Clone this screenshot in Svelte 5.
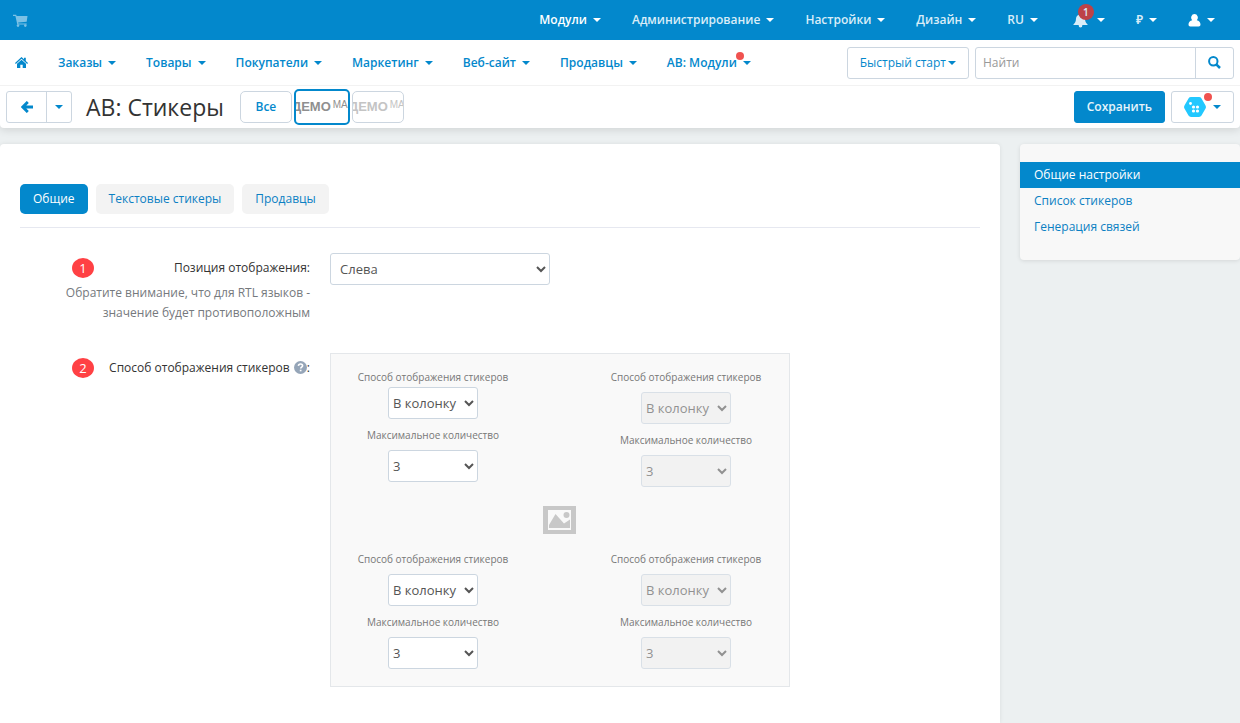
<script lang="ts">
  type Slot = { id: string; disabled: boolean; tight?: boolean };

  const topMenu = ['Модули', 'Администрирование', 'Настройки', 'Дизайн', 'RU'];
  const mainMenu = ['Заказы', 'Товары', 'Покупатели', 'Маркетинг', 'Веб-сайт', 'Продавцы', 'АВ: Модули'];
  const tabs = ['Общие', 'Текстовые стикеры', 'Продавцы'];
  const sections = ['Общие настройки', 'Список стикеров', 'Генерация связей'];

  const topSlots: Slot[] = [
    { id: 'top-left', disabled: false, tight: true },
    { id: 'top-right', disabled: true }
  ];
  const bottomSlots: Slot[] = [
    { id: 'bottom-left', disabled: false },
    { id: 'bottom-right', disabled: true }
  ];

  let activeTab = $state('Общие');
  let activeSection = $state('Общие настройки');
</script>

{#snippet slotFields(slot: Slot)}
  <div class="slot" class:tight={slot.tight}>
    <label for="{slot.id}-mode">Способ отображения стикеров</label>
    <select id="{slot.id}-mode" disabled={slot.disabled}>
      <option>В колонку</option>
      <option>В строку</option>
    </select>
    <label for="{slot.id}-max">Максимальное количество</label>
    <select id="{slot.id}-max" class="count" disabled={slot.disabled}>
      <option>3</option>
      <option>2</option>
      <option>1</option>
    </select>
  </div>
{/snippet}

<div class="page">
  <header>
    <div class="topbar">
      <a href="#store" class="cart" aria-label="Витрина">
        <svg width="15" height="13" viewBox="0 0 15 13" fill="currentColor">
          <path d="M0 .8h3.200l.4 1.200H14.500l-.8 5.700-8.500.8.2.9h8.300v1H4.300L2.400 1.900H0z" />
          <circle cx="5" cy="11.600" r="1.300" />
          <circle cx="12.300" cy="11.600" r="1.300" />
        </svg>
      </a>
      <nav class="top-menu">
        {#each topMenu as item, i}
          <a href="#top" class:current={i === 0}>{item}<span class="caret"></span></a>
        {/each}
        <a href="#notifications" class="bell" aria-label="Уведомления">
          <svg width="15" height="15" viewBox="0 0 15 15" fill="currentColor">
            <path d="M6.700 1.500a.8.8 0 0 1 1.600 0c2.300.4 3.600 2 3.700 4.300.1 2.800.8 4.200 2.500 5.400v.8H.5v-.8C2.200 10 2.900 8.600 3 5.800c.1-2.300 1.400-3.900 3.700-4.300zM5.600 12h3.800a1.900 2.600 0 0 1-3.800 0z" />
          </svg>
          <span class="bell-count">1</span>
          <span class="caret"></span>
        </a>
        <a href="#currency">₽<span class="caret"></span></a>
        <a href="#user" class="current" aria-label="Профиль">
          <svg width="13" height="13" viewBox="0 0 13 13" fill="currentColor">
            <path d="M6.500 0a3.300 3.600 0 0 1 2.300 6.200c2.300.6 3.700 2 3.700 4.300 0 1.300-.7 2-1.800 2H2.300c-1.100 0-1.800-.7-1.800-2 0-2.300 1.400-3.700 3.700-4.300A3.300 3.600 0 0 1 6.500 0z" />
          </svg>
          <span class="caret"></span>
        </a>
      </nav>
    </div>

    <div class="mainbar">
      <nav class="main-menu">
        <a href="#home" aria-label="Главная">
          <svg width="13" height="11" viewBox="0 0 13 11" fill="currentColor">
            <path d="M6.500 0 9 2.300V.7h1.800V4L13 6l-.8.900L6.500 1.800.8 6.900 0 6z" />
            <path d="M6.500 2.700 11 6.700V11H7.700V7.800H5.300V11H2V6.700z" />
          </svg>
        </a>
        {#each mainMenu as item, i}
          <a href="#menu">
            {item}{#if i === mainMenu.length - 1}<span class="dot"></span>{/if}<span class="caret"></span>
          </a>
        {/each}
      </nav>
      <div class="tools">
        <button class="btn quick">Быстрый старт<span class="caret"></span></button>
        <form class="search">
          <input type="search" placeholder="Найти" aria-label="Найти" />
          <button type="button" aria-label="Искать">
            <svg width="13" height="13" viewBox="0 0 13 13" fill="none" stroke="currentColor" stroke-width="2">
              <circle cx="5.300" cy="5.300" r="4.200" />
              <path d="m8.300 8.300 3.700 3.700" stroke-width="2.500" />
            </svg>
          </button>
        </form>
      </div>
    </div>

    <div class="titlebar">
      <div class="back">
        <button aria-label="Назад">
          <svg width="12" height="12" viewBox="0 0 12 12" fill="none" stroke="currentColor" stroke-width="2.800">
            <path d="M6.800.9 1.800 6l5 5.100M2 6h10" />
          </svg>
        </button>
        <button class="history" aria-label="История"><span class="caret"></span></button>
      </div>
      <h1>АВ: Стикеры</h1>
      <div class="vendors">
        <button class="btn all">Все</button>
        <button class="vendor active"><b>ДЕМО</b><sup>МАГ</sup></button>
        <button class="vendor"><b>ДЕМО</b><sup>МАГ</sup></button>
      </div>
      <div class="actions">
        <button class="btn save">Сохранить</button>
        <button class="btn addon" aria-label="Модуль">
          <svg width="22" height="20" viewBox="0 0 22 20">
            <path d="M7 0h8a3 3 0 0 1 2.500 1.400l3.900 6.800a3.500 3.500 0 0 1 0 3.600l-3.900 6.800A3 3 0 0 1 15 20H7a3 3 0 0 1-2.500-1.400L.6 11.800a3.500 3.500 0 0 1 0-3.600l3.900-6.800A3 3 0 0 1 7 0z" fill="#22c8ff" />
            <g fill="#fff">
              <circle cx="6.500" cy="6.500" r="1.400" />
              <circle cx="9.500" cy="10" r="1.600" />
              <circle cx="13.500" cy="10" r="1.600" />
              <circle cx="9.500" cy="14" r="1.600" />
              <circle cx="13.500" cy="14" r="1.600" />
            </g>
          </svg>
          <span class="dot"></span>
          <span class="caret"></span>
        </button>
      </div>
    </div>
  </header>

  <div class="columns">
    <main>
      <div class="tabs">
        {#each tabs as tab}
          <button class:active={tab === activeTab} onclick={() => (activeTab = tab)}>{tab}</button>
        {/each}
      </div>

      <div class="field">
        <div class="caption">
          <div class="caption-line">
            <span class="step">1</span>
            <label for="position">Позиция отображения:</label>
          </div>
          <p>Обратите внимание, что для RTL языков - значение будет противоположным</p>
        </div>
        <select id="position">
          <option>Слева</option>
          <option>Справа</option>
        </select>
      </div>

      <div class="field">
        <div class="caption">
          <div class="caption-line">
            <span class="step">2</span>
            <span class="name">
              Способ отображения стикеров
              <svg width="13" height="13" viewBox="0 0 13 13">
                <circle cx="6.500" cy="6.500" r="6.500" fill="#95a5b8" />
                <path d="M4.400 4.900c.1-1.300 1-1.900 2.200-1.900 1.200 0 2 .7 2 1.700 0 1.400-1.900 1.400-1.900 2.800" fill="none" stroke="#fff" stroke-width="1.600" />
                <path d="M5.800 8.700h1.700v1.600H5.800z" fill="#fff" />
              </svg>:
            </span>
          </div>
        </div>
        <div class="preview">
          <div class="slots">
            {#each topSlots as slot}{@render slotFields(slot)}{/each}
          </div>
          <svg class="picture" width="33" height="28" viewBox="0 0 33 28">
            <path d="M0 0h33v28H0z" fill="#c8c8c8" />
            <path d="M5 4h23v20H5z" fill="#f9f9f9" />
            <path d="M6 22v-3l6.500-11L21 17.500l6-4V22z" fill="#c8c8c8" />
            <circle cx="23.500" cy="9" r="3" fill="#c8c8c8" />
          </svg>
          <div class="slots">
            {#each bottomSlots as slot}{@render slotFields(slot)}{/each}
          </div>
        </div>
      </div>
    </main>

    <aside>
      {#each sections as section}
        <a href="#section" class:active={section === activeSection} onclick={() => (activeSection = section)}>{section}</a>
      {/each}
    </aside>
  </div>
</div>

<style>
  :global(body) {
    margin: 0;
    background: #ecf0f1;
  }

  .page {
    display: flex;
    flex-direction: column;
    min-height: 100vh;
    font: 12px/20px 'Open Sans', 'Noto Sans', sans-serif;
    color: #333;
  }

  .page * {
    box-sizing: border-box;
  }

  a {
    color: inherit;
    text-decoration: none;
  }

  button,
  input,
  select {
    margin: 0;
    font: inherit;
    color: inherit;
  }

  button {
    padding: 0;
    border: none;
    background: none;
    cursor: pointer;
  }

  svg {
    flex: none;
  }

  header {
    background: #fff;
    border-radius: 0 0 4px 4px;
    box-shadow: 0 2px 8px rgba(0, 0, 0, 0.12);
    color: #0388cc;
  }

  .caret {
    flex: none;
    border: 4px solid transparent;
    border-top-color: currentColor;
    border-bottom: none;
  }

  .dot {
    position: absolute;
    width: 8px;
    height: 8px;
    border-radius: 50%;
    background: #f0524f;
  }

  .topbar {
    display: flex;
    align-items: center;
    justify-content: space-between;
    height: 40px;
    padding: 0 25px 0 13px;
    background: #0388cc;
    color: #d9edf8;
  }

  .cart {
    display: flex;
    color: #7cc1e5;
  }

  .top-menu {
    display: flex;
    gap: 31px;
    font-weight: 600;
  }

  .top-menu a {
    display: flex;
    align-items: center;
    gap: 6px;
  }

  .top-menu .current {
    color: #fff;
  }

  .top-menu .caret {
    color: #fff;
  }

  .bell {
    position: relative;
  }

  .top-menu .bell {
    gap: 9px;
    margin-left: 4px;
  }

  .bell-count {
    position: absolute;
    top: 0;
    left: 5px;
    width: 16px;
    height: 16px;
    margin-top: -6px;
    border-radius: 8px;
    background: #bd4247;
    font-size: 10px;
    line-height: 16px;
    text-align: center;
  }

  .mainbar {
    display: flex;
    align-items: center;
    justify-content: space-between;
    height: 46px;
    padding: 0 6px 0 15px;
    border-bottom: 1px solid #f2f2f2;
  }

  .main-menu {
    display: flex;
    gap: 30px;
    font-weight: 600;
  }

  .main-menu a {
    position: relative;
    display: flex;
    align-items: center;
    gap: 6px;
  }

  .main-menu .dot {
    top: -1px;
    right: 7px;
  }

  .tools,
  .actions {
    display: flex;
    gap: 6px;
  }

  .btn {
    display: flex;
    align-items: center;
    justify-content: center;
    height: 32px;
    padding: 0 12px;
    border: 1px solid #ccd6e0;
    border-radius: 3px;
    background: #fff;
  }

  .quick {
    gap: 2px;
  }

  .search {
    display: flex;
    width: 259px;
    height: 32px;
    border: 1px solid #ccd6e0;
    border-radius: 3px;
  }

  .search input {
    flex: 1;
    min-width: 0;
    padding: 0 7px;
    border: none;
    background: none;
    outline: none;
    color: #333;
  }

  .search input::placeholder {
    color: #999;
  }

  .search button {
    display: flex;
    align-items: center;
    justify-content: center;
    width: 38px;
    border-left: 1px solid #ccd6e0;
  }

  .titlebar {
    display: flex;
    align-items: center;
    height: 42px;
    padding: 0 6px;
  }

  .back {
    display: flex;
    height: 32px;
    border: 1px solid #ccd6e0;
    border-radius: 3px;
  }

  .back button {
    display: flex;
    align-items: center;
    justify-content: center;
    width: 39px;
  }

  .back .history {
    width: 25px;
    border-left: 1px solid #ccd6e0;
  }

  h1 {
    margin: 0 16px 0 14px;
    font-size: 23px;
    font-weight: 400;
    line-height: 32px;
    color: #333;
  }

  .vendors {
    display: flex;
    align-items: center;
    gap: 2px;
  }

  .all {
    width: 52px;
    border-radius: 5px;
    font-weight: 600;
  }

  .vendor {
    display: flex;
    align-items: center;
    width: 52px;
    height: 32px;
    overflow: hidden;
    border: 1px solid #ccd6e0;
    border-radius: 5px;
    font-family: 'Liberation Sans', sans-serif;
    font-size: 13px;
    color: #c4c4c4;
  }

  .vendor b {
    margin-left: -4px;
  }

  .vendor sup {
    margin: 0 0 4px 2px;
    font-size: 10px;
    line-height: 16px;
  }

  .vendor.active {
    width: 56px;
    height: 36px;
    border: 2px solid #0388cc;
    color: #8f8f8f;
  }

  .actions {
    margin-left: auto;
  }

  .save {
    border-color: #0388cc;
    background: #0388cc;
    color: #e6f4fb;
    font-weight: 600;
  }

  .addon {
    position: relative;
    gap: 7px;
  }

  .addon .dot {
    top: 1px;
    right: 21px;
  }

  .columns {
    display: flex;
    flex: 1;
    gap: 20px;
    padding-top: 16px;
  }

  main {
    flex: 1;
    min-width: 0;
    padding: 40px 20px 6px;
    border-radius: 4px 4px 0 0;
    background: #fff;
    box-shadow: 0 0 4px rgba(0, 0, 0, 0.08);
  }

  .tabs {
    display: flex;
    gap: 8px;
    margin-bottom: 25px;
    padding-bottom: 13px;
    border-bottom: 1px solid #e6e8f0;
  }

  .tabs button {
    height: 30px;
    padding: 0 13px;
    border-radius: 5px;
    background: #f3f3f3;
    color: #0b80c3;
  }

  .tabs .active {
    background: #0388cc;
    color: #fff;
  }

  .field {
    display: flex;
    align-items: flex-start;
    gap: 20px;
    margin-bottom: 30px;
  }

  .caption {
    flex: none;
    width: 290px;
    text-align: right;
  }

  .caption-line {
    display: flex;
    align-items: center;
    justify-content: space-between;
    height: 30px;
    padding-left: 52px;
  }

  .caption p {
    margin: 0;
    color: #75797d;
  }

  .name svg {
    margin-left: 1px;
    vertical-align: -2px;
  }

  .step {
    width: 22px;
    height: 20px;
    border-radius: 50%;
    background: #ff4144;
    color: #fff;
    font-size: 13px;
    text-align: center;
  }

  select {
    height: 32px;
    border: 1px solid #ccd6e0;
    border-radius: 3px;
    background: #fff;
    color: #555;
    font-size: 13px;
  }

  #position {
    width: 220px;
    padding: 0 5px;
  }

  .preview {
    width: 460px;
    padding: 13px 23px 17px 22px;
    border: 1px solid #e4e7ea;
    background: #f9f9f9;
  }

  .slots {
    display: flex;
    justify-content: space-between;
  }

  .slot {
    display: flex;
    flex-direction: column;
    align-items: center;
    width: 160px;
    font-size: 10px;
    color: #777;
  }

  .slot select {
    width: 90px;
    margin: 5px 0 6px;
  }

  .slot .count {
    margin-bottom: 0;
  }

  .tight select:not(.count) {
    margin-top: 0;
  }

  .slot select:disabled {
    background: #f0f0f0;
    color: #666;
  }

  .picture {
    display: block;
    margin: 19px auto 15px;
  }

  aside {
    display: flex;
    flex: none;
    flex-direction: column;
    align-self: flex-start;
    width: 220px;
    padding: 18px 0 20px;
    border-radius: 4px;
    background: #f8f8f8;
    box-shadow: 0 1px 4px rgba(0, 0, 0, 0.1);
  }

  aside a {
    padding: 3px 14px;
    color: #0b80c3;
  }

  aside .active {
    background: #0388cc;
    color: #fff;
  }
</style>
